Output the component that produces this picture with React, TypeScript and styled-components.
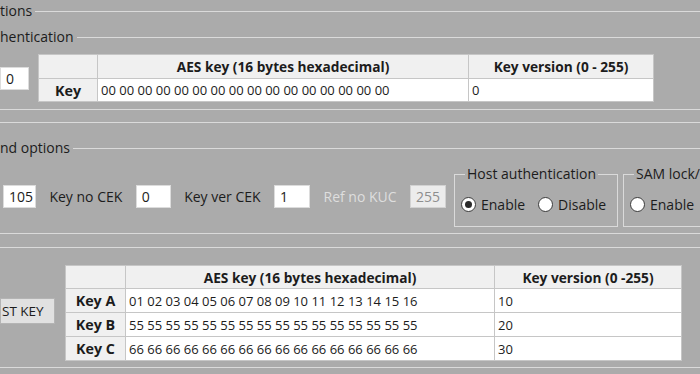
import React from "react";
import styled, {createGlobalStyle} from "styled-components";

const GlobalStyle = createGlobalStyle`
  html, body {
    margin: 0;
    background: #ababab;
    overflow: hidden;
  }
  body {
    font-family: "Open Sans", "Noto Sans", sans-serif;
    font-size: 14px;
    color: #1c1c1c;
  }
`

const LINE = '#dadada'

const Page = styled.div`
  width: 700px;
  height: 374px;
  display: flex;
  flex-direction: column;
`

const TitleRow = styled.div<{ $top: number }>`
  display: flex;
  align-items: center;
  gap: 3px;
  height: 18px;
  margin-top: ${p => p.$top}px;
`
const TitleText = styled.span`
  line-height: 18px;
  white-space: nowrap;
`
const TitleLine = styled.div`
  flex: 1;
  border-top: 1px solid ${LINE};
`

const Rule = styled.div<{ $top: number }>`
  border-top: 1px solid ${LINE};
  margin-top: ${p => p.$top}px;
`

const AuthRow = styled.div`
  display: flex;
  align-items: center;
  gap: 9px;
  margin-top: 8px;
`

const TextBox = styled.div<{ $width: number; $disabled?: boolean }>`
  box-sizing: border-box;
  width: ${p => p.$width}px;
  height: 23px;
  padding: 0 5px;
  line-height: 21px;
  background: ${p => p.$disabled ? '#ececec' : '#ffffff'};
  border: 1px solid ${p => p.$disabled ? '#d2d2d2' : '#dcdcdc'};
  color: ${p => p.$disabled ? '#8e8e8e' : '#1c1c1c'};
  flex-shrink: 0;
`

const Grid = styled.table<{ $width: number }>`
  width: ${p => p.$width}px;
  flex-shrink: 0;
  border-collapse: collapse;
  table-layout: fixed;
  background: #ffffff;
  border: 1px solid #e4e4e4;
  font-size: 13px;
`
const HeadCell = styled.th<{ $height: number }>`
  height: ${p => p.$height}px;
  padding: 0 3px;
  background: #f0f0f0;
  border: 1px solid #c6c6c6;
  font-size: 13.7px;
  font-weight: 700;
  text-align: center;
  white-space: nowrap;
`
const RowHead = styled.th<{ $height: number }>`
  height: ${p => p.$height}px;
  padding: 0 2px;
  background: #f0f0f0;
  border: 1px solid #c6c6c6;
  font-size: 14.3px;
  font-weight: 700;
  text-align: center;
  white-space: nowrap;
`
const Cell = styled.td<{ $height: number }>`
  height: ${p => p.$height}px;
  padding: 0 3px;
  border: 1px solid #c6c6c6;
  white-space: nowrap;
  overflow: hidden;
`

const OptionsRow = styled.div`
  display: flex;
  align-items: flex-start;
  margin-top: 9px;
`
const Fields = styled.div`
  box-sizing: border-box;
  flex-shrink: 0;
  width: 446px;
  display: flex;
  align-items: center;
  justify-content: space-between;
  margin-top: 19px;
  padding-left: 3px;
`
const FieldLabel = styled.span<{ $disabled?: boolean }>`
  white-space: nowrap;
  color: ${p => p.$disabled ? '#dedede' : '#1c1c1c'};
`

const GroupBox = styled.fieldset<{ $left: number; $width: number }>`
  box-sizing: border-box;
  flex-shrink: 0;
  margin: 0 0 0 ${p => p.$left}px;
  width: ${p => p.$width}px;
  height: 61px;
  padding: 0 0 0 6px;
  border: 1px solid ${LINE};
  display: flex;
  align-items: center;
  gap: 13px;
`
const GroupLegend = styled.legend`
  margin-left: 4px;
  padding: 0 2px;
  line-height: 16px;
  white-space: nowrap;
`

const RadioItem = styled.label`
  display: flex;
  align-items: center;
  gap: 5px;
  margin-top: 1px;
  white-space: nowrap;
`
const RadioDot = styled.span<{ $checked?: boolean }>`
  box-sizing: border-box;
  width: 15px;
  height: 15px;
  border-radius: 50%;
  border: 1px solid #3a3a3a;
  background: #ffffff;
  display: flex;
  align-items: center;
  justify-content: center;
  &::after {
    content: '';
    width: 7px;
    height: 7px;
    border-radius: 50%;
    background: ${p => p.$checked ? '#2a2a2a' : 'transparent'};
  }
`

const KeysRow = styled.div`
  display: flex;
  align-items: flex-start;
  gap: 10px;
  margin-top: 17px;
`
const ActionButton = styled.button`
  box-sizing: border-box;
  flex-shrink: 0;
  width: 55px;
  height: 26px;
  margin-top: 33px;
  padding: 0 0 0 1px;
  text-align: left;
  background: #e1e1e1;
  border: 1px solid #b4b4b4;
  font-family: inherit;
  font-size: 13.5px;
  color: #1c1c1c;
  white-space: nowrap;
  overflow: hidden;
`

type KeyRow = { name: string; aes: string; version: string }

const keys: KeyRow[] = [
    {name: 'Key A', aes: '01 02 03 04 05 06 07 08 09 10 11 12 13 14 15 16', version: '10'},
    {name: 'Key B', aes: '55 55 55 55 55 55 55 55 55 55 55 55 55 55 55 55', version: '20'},
    {name: 'Key C', aes: '66 66 66 66 66 66 66 66 66 66 66 66 66 66 66 66', version: '30'},
]

function Radio({label, checked}: { label: string; checked?: boolean }) {
    return (
        <RadioItem>
            <RadioDot $checked={checked}/>
            {label}
        </RadioItem>
    )
}

function App() {
    return (
        <Page>
            <GlobalStyle/>
            <TitleRow $top={2}>
                <TitleText>tions</TitleText>
                <TitleLine/>
            </TitleRow>
            <TitleRow $top={8}>
                <TitleText>hentication</TitleText>
                <TitleLine/>
            </TitleRow>
            <AuthRow>
                <TextBox $width={29}>0</TextBox>
                <Grid $width={615}>
                    <colgroup>
                        <col style={{width: 59}}/>
                        <col style={{width: 371}}/>
                        <col style={{width: 185}}/>
                    </colgroup>
                    <thead>
                    <tr>
                        <HeadCell $height={23}/>
                        <HeadCell $height={23}>AES key (16 bytes hexadecimal)</HeadCell>
                        <HeadCell $height={23}>Key version (0 - 255)</HeadCell>
                    </tr>
                    </thead>
                    <tbody>
                    <tr>
                        <RowHead $height={22}>Key</RowHead>
                        <Cell $height={22}>00 00 00 00 00 00 00 00 00 00 00 00 00 00 00 00</Cell>
                        <Cell $height={22}>0</Cell>
                    </tr>
                    </tbody>
                </Grid>
            </AuthRow>
            <Rule $top={7}/>
            <Rule $top={12}/>

            <TitleRow $top={16}>
                <TitleText>nd options</TitleText>
                <TitleLine/>
            </TitleRow>
            <OptionsRow>
                <Fields>
                    <TextBox $width={33}>105</TextBox>
                    <FieldLabel>Key no CEK</FieldLabel>
                    <TextBox $width={35}>0</TextBox>
                    <FieldLabel>Key ver CEK</FieldLabel>
                    <TextBox $width={36}>1</TextBox>
                    <FieldLabel $disabled>Ref no KUC</FieldLabel>
                    <TextBox $width={36} $disabled>255</TextBox>
                </Fields>
                <GroupBox $left={8} $width={164}>
                    <GroupLegend>Host authentication</GroupLegend>
                    <Radio label="Enable" checked/>
                    <Radio label="Disable"/>
                </GroupBox>
                <GroupBox $left={5} $width={164}>
                    <GroupLegend>SAM lock/unlock</GroupLegend>
                    <Radio label="Enable"/>
                    <Radio label="Disable"/>
                </GroupBox>
            </OptionsRow>
            <Rule $top={6}/>
            <Rule $top={13}/>

            <KeysRow>
                <ActionButton>ST KEY</ActionButton>
                <Grid $width={616}>
                    <colgroup>
                        <col style={{width: 60}}/>
                        <col style={{width: 369}}/>
                        <col style={{width: 187}}/>
                    </colgroup>
                    <thead>
                    <tr>
                        <HeadCell $height={22}/>
                        <HeadCell $height={22}>AES key (16 bytes hexadecimal)</HeadCell>
                        <HeadCell $height={22}>Key version (0 -255)</HeadCell>
                    </tr>
                    </thead>
                    <tbody>
                    {keys.map(k => (
                        <tr key={k.name}>
                            <RowHead $height={23}>{k.name}</RowHead>
                            <Cell $height={23}>{k.aes}</Cell>
                            <Cell $height={23}>{k.version}</Cell>
                        </tr>
                    ))}
                    </tbody>
                </Grid>
            </KeysRow>
            <Rule $top={6}/>
        </Page>
    )
}

export default App;
